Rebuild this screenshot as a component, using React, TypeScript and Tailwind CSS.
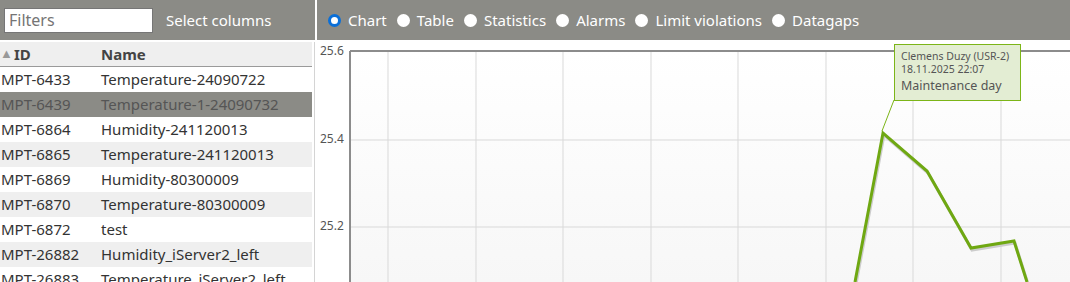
const rows = [
  { id: "MPT-6433", name: "Temperature-24090722" },
  { id: "MPT-6439", name: "Temperature-1-24090732" },
  { id: "MPT-6864", name: "Humidity-241120013" },
  { id: "MPT-6865", name: "Temperature-241120013" },
  { id: "MPT-6869", name: "Humidity-80300009" },
  { id: "MPT-6870", name: "Temperature-80300009" },
  { id: "MPT-6872", name: "test" },
  { id: "MPT-26882", name: "Humidity_iServer2_left" },
  { id: "MPT-26883", name: "Temperature_iServer2_left" },
];

const views = ["Chart", "Table", "Statistics", "Alarms", "Limit violations", "Datagaps"];

function Radio({ checked }: { checked?: boolean }) {
  if (checked) {
    return (
      <span className="w-[13px] h-[13px] rounded-full bg-white border-[3px] border-[#0a6fd8] shrink-0" />
    );
  }
  return <span className="w-[13px] h-[13px] rounded-full bg-white shrink-0" />;
}

function Chart() {
  // grid geometry relative to the svg (svg starts at x=317, y=40)
  const left = 33;
  const top = 11;
  const step = 87.5;
  const vx = [71, 159, 246, 334, 421, 509, 596, 684];
  const hy = [100, 187];
  const line = "538,242 566,93 610,131 654,208 697,201 710,242";
  return (
    <svg width="753" height="242" className="block shrink-0">
      <defs>
        <linearGradient id="bg" x1="0" y1="0" x2="0" y2="1">
          <stop offset="0" stopColor="#ffffff" />
          <stop offset="1" stopColor="#f7f7f7" />
        </linearGradient>
      </defs>
      <rect x={left} y={top} width={753 - left} height={242 - top} fill="url(#bg)" />
      {vx.map((x) => (
        <line key={x} x1={x} y1={top} x2={x} y2={242} stroke="#d9d9d9" strokeWidth="1" />
      ))}
      {hy.map((y) => (
        <line key={y} x1={left} y1={y} x2={753} y2={y} stroke="#d9d9d9" strokeWidth="1" />
      ))}
      <line x1={left} y1={top} x2={753} y2={top} stroke="#8c8c8c" strokeWidth="2" />
      <line x1={left} y1={top} x2={left} y2={242} stroke="#8c8c8c" strokeWidth="2" />
      <g fontFamily="'Noto Sans', 'Open Sans', sans-serif" fontSize="12" fill="#555">
        <text x="3" y={top + 4}>25.6</text>
        <text x="3" y={top + step + 4}>25.4</text>
        <text x="3" y={top + 2 * step + 4}>25.2</text>
      </g>
      <polyline points={line} fill="none" stroke="#cccccc" strokeWidth="3" transform="translate(1,2)" strokeLinejoin="miter" />
      <polyline points={line} fill="none" stroke="#6fa812" strokeWidth="3" strokeLinejoin="miter" />
      <line x1="565" y1="91" x2="577" y2="60" stroke="#7cb518" strokeWidth="1" />
      <rect x="577.5" y="4.5" width="126" height="56" fill="#e3edd3" stroke="#7cb518" strokeWidth="1" />
      <g fontFamily="'Noto Sans', 'Open Sans', sans-serif" fill="#555">
        <text x="584" y="20" fontSize="10.5">Clemens Duzy (USR-2)</text>
        <text x="584" y="33" fontSize="10.5">18.11.2025 22:07</text>
        <text x="584" y="50" fontSize="12.5">Maintenance day</text>
      </g>
    </svg>
  );
}

export default function App() {
  return (
    <div
      className="flex w-[1070px] h-[282px] overflow-hidden bg-white text-[15px] text-[#333]"
      style={{ fontFamily: "'Noto Sans', 'Open Sans', sans-serif" }}
    >
      {/* left: measuring point list */}
      <div className="w-[315px] shrink-0 flex flex-col">
        <div className="h-10 shrink-0 bg-[#8b8b86] flex items-center pl-1 gap-[13px]">
          <input
            placeholder="Filters"
            className="w-[149px] h-[25px] bg-white border border-[#767676] px-1 text-[16px] placeholder:text-[#757575] outline-none"
          />
          <span className="text-white">Select columns</span>
        </div>
        <div className="flex-1 mt-[2px] border-r border-[#d4d4d4] pr-[2px]">
          <div className="h-[25px] bg-[#efefef] border-b border-[#9a9a9a] flex items-center font-bold text-[#444]">
            <span className="w-[101px] flex items-center">
              <span className="text-[#999] text-[13px] mr-[1px]">▲</span>ID
            </span>
            <span>Name</span>
          </div>
          {rows.map((r, i) => (
            <div
              key={r.id}
              className={
                "h-[25px] flex items-center " +
                (i === 1 ? "bg-[#8b8b86] text-[#555]" : i % 2 === 1 ? "bg-[#efefef]" : "bg-white")
              }
            >
              <span className="w-[101px] pl-[1px]">{r.id}</span>
              <span>{r.name}</span>
            </div>
          ))}
        </div>
      </div>
      {/* right: chart view */}
      <div className="flex-1 flex flex-col ml-[2px]">
        <div className="h-10 shrink-0 bg-[#8b8b86] flex items-center pl-[11px] gap-[10px] text-white">
          {views.map((v, i) => (
            <label key={v} className="flex items-center gap-[7px]">
              <Radio checked={i === 0} />
              <span>{v}</span>
            </label>
          ))}
        </div>
        <Chart />
      </div>
    </div>
  );
}
